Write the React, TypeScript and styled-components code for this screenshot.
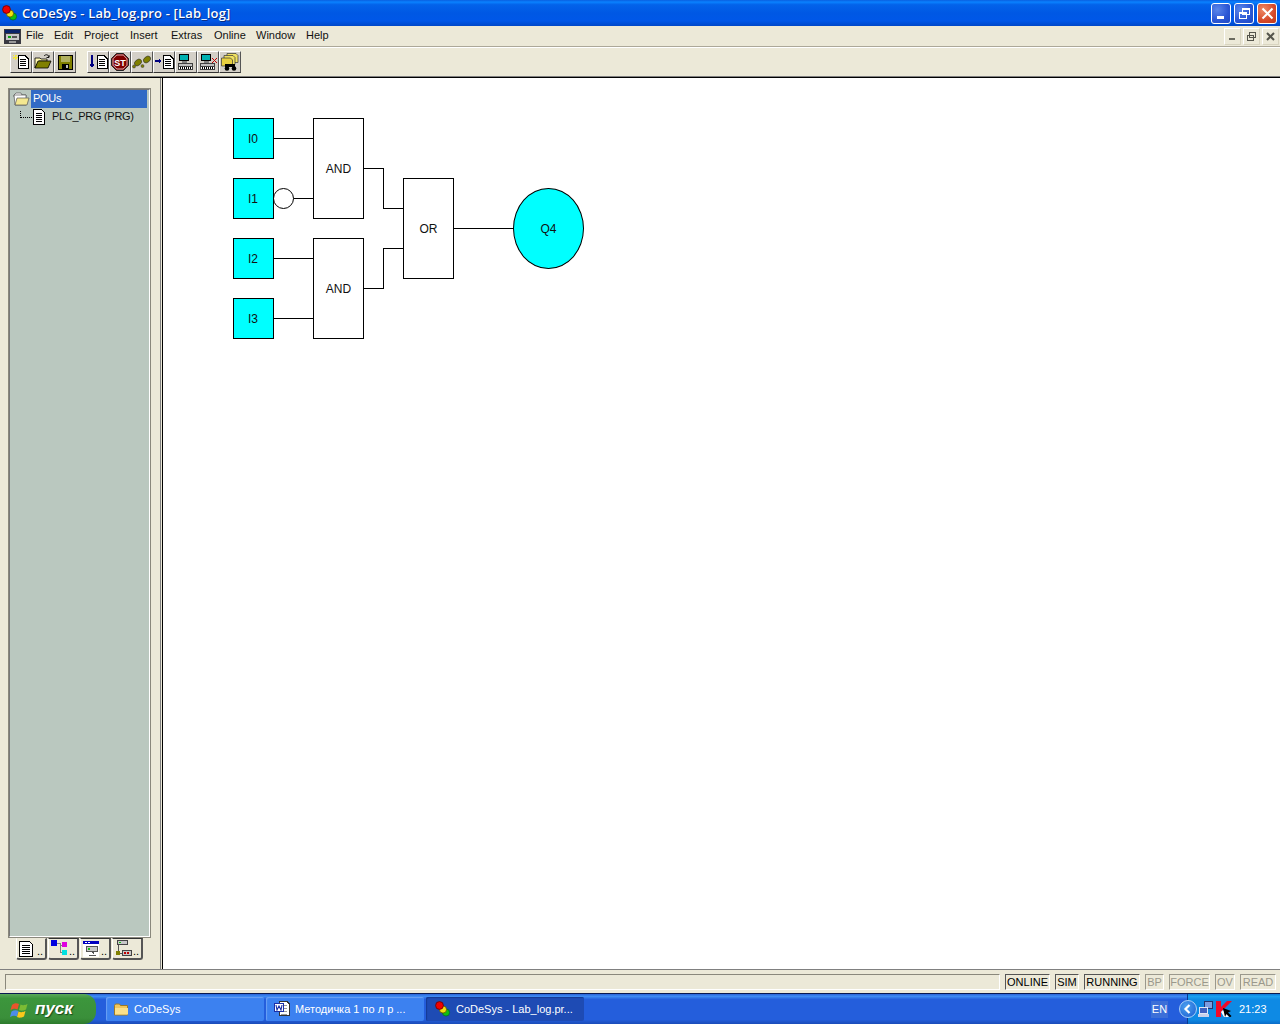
import React from "react";
import styled, { createGlobalStyle } from "styled-components";

const GlobalStyle = createGlobalStyle`
  html, body { margin: 0; padding: 0; background: #ece9d8; }
  * { box-sizing: border-box; }
`;

const uiFont = `"Liberation Sans", Arial, sans-serif`;

const Logo = ({ size = 16 }: { size?: number }) => (
  <svg width={size} height={size} viewBox="0 0 16 16">
    <circle cx="11" cy="11.5" r="3.6" fill="#10c010" stroke="#063" strokeWidth="0.8" />
    <circle cx="8" cy="8.5" r="3.6" fill="#f0e010" stroke="#550" strokeWidth="0.8" />
    <circle cx="4.5" cy="4.5" r="3.9" fill="#f00000" stroke="#600" strokeWidth="0.8" />
  </svg>
);

const DocShape = ({ x = 0 }: { x?: number }) => (
  <g transform={`translate(${x} 0)`}>
    <path d="M3 1.5h7l3 3v10H3z" fill="#fff" stroke="#000" />
    <path d="M5 5h6M5 7h6M5 9h6M5 11h6" stroke="#000" />
  </g>
);

const IconNew = () => (
  <svg width="17" height="16" viewBox="0 0 17 16" shapeRendering="crispEdges">
    <g transform="translate(2 0)">
      <DocShape />
    </g>
    <path d="M0 3h5M2 1v5M0 1l1 1M4 1l-1 1M0 5l1-1M4 5l-1-1" stroke="#f4e838" />
  </svg>
);
const IconOpen = () => (
  <svg width="18" height="16" viewBox="0 0 18 16">
    <path d="M1 4h5l1 1h6v2H5L1 14z" fill="#fff8b0" stroke="#000" strokeWidth="0.8" />
    <path d="M1 14l3-7h13l-3 7z" fill="#808000" stroke="#000" strokeWidth="0.8" />
    <path d="M10 2c2-2 4-1.500 5 1M15 1v2.500h-2.500" fill="none" stroke="#000" strokeWidth="0.9" />
  </svg>
);
const IconSave = () => (
  <svg width="15" height="15" viewBox="0 0 15 15" shapeRendering="crispEdges">
    <path d="M0 0h15v15H0z" fill="#000" />
    <path d="M1 1h13v13H1z" fill="#808000" />
    <path d="M3 1h9v6H3z" fill="#b0b060" />
    <path d="M4 9h7v5H4z" fill="#000" />
    <path d="M8 10h2v3H8z" fill="#c0c0c0" />
  </svg>
);
const IconDownload = () => (
  <svg width="19" height="16" viewBox="0 0 19 16" shapeRendering="crispEdges">
    <path d="M3 1v12M1 10l2 3 2-3" fill="none" stroke="#000080" strokeWidth="1.2" />
    <DocShape x={5} />
  </svg>
);
const IconStop = () => (
  <svg width="18" height="18" viewBox="0 0 18 18">
    <path d="M5.500 0.500h7l5 5v7l-5 5h-7l-5-5v-7z" fill="#800000" stroke="#222" />
    <path d="M5.800 2h6.400l3.800 3.800v6.400L12.200 16H5.800L2 12.200V5.800z" fill="none" stroke="#fff" strokeWidth="0.7" />
    <text x="9" y="12.500" textAnchor="middle" fontFamily={uiFont} fontSize="9" fontWeight="700" fill="#fff">ST</text>
  </svg>
);
const IconSteps = () => (
  <svg width="20" height="16" viewBox="0 0 20 16">
    <ellipse cx="6" cy="8.500" rx="2.800" ry="4" transform="rotate(50 6 8.500)" fill="#808000" stroke="#333" strokeWidth="0.6" />
    <ellipse cx="15" cy="5.500" rx="2.800" ry="4" transform="rotate(50 15 5.500)" fill="#808000" stroke="#333" strokeWidth="0.6" />
    <circle cx="2" cy="12.500" r="1.500" fill="#808000" stroke="#333" strokeWidth="0.5" />
    <circle cx="10.500" cy="12" r="1.500" fill="#808000" stroke="#333" strokeWidth="0.5" />
  </svg>
);
const IconStepIn = () => (
  <svg width="19" height="16" viewBox="0 0 19 16" shapeRendering="crispEdges">
    <path d="M0 7h6M4 5l2 2-2 2" fill="none" stroke="#000080" strokeWidth="1.2" />
    <DocShape x={5} />
  </svg>
);
const IconPlc = ({ cross }: { cross?: boolean }) => (
  <svg width="19" height="17" viewBox="0 0 19 17" shapeRendering="crispEdges">
    <path d="M2 0h10v7H2z" fill="#000" />
    <path d="M3 1h8v5H3z" fill="#00b0b0" />
    <path d="M5 7h5v2H5z" fill="#808080" />
    <path d="M1 9h15v7H1z" fill="#404040" />
    <path d="M2 10h13v2H2z" fill="#c0c0c0" />
    <path d="M2 13h13v2H2z" fill="#fff" />
    <path d="M3 13v2M5 13v2M7 13v2M9 13v2M11 13v2M13 13v2" stroke="#000" />
    {cross && <path d="M13 4l5 5M18 4l-5 5" stroke="#c00000" strokeWidth="1.200" />}
  </svg>
);
const IconProject = () => (
  <svg width="18" height="18" viewBox="0 0 18 18">
    <path d="M6 0.500h9l2 2v7H6z" fill="#f0e060" stroke="#333" strokeWidth="0.7" />
    <path d="M3 2.500h9l2 2v7H3z" fill="#f0e060" stroke="#333" strokeWidth="0.7" />
    <path d="M0.500 5h9l2 2v6h-11z" fill="#e8d040" stroke="#333" strokeWidth="0.7" />
    <path d="M4 11h10v3H4z" fill="#000" />
    <circle cx="6" cy="15.500" r="2.300" fill="#000" />
    <circle cx="13" cy="15.500" r="2.300" fill="#000" />
  </svg>
);
const IconFolderOpen = () => (
  <svg width="17" height="14" viewBox="0 0 17 14">
    <path d="M1 3l2-2h5l1 2h4v2H1z" fill="#fff" stroke="#555" strokeWidth="0.7" />
    <path d="M1 3h12v10H2z" fill="#fff" stroke="#555" strokeWidth="0.7" />
    <path d="M2 13L4 6h12l-2 7z" fill="#f4e890" stroke="#555" strokeWidth="0.7" />
  </svg>
);
const IconFolder = () => (
  <svg width="15" height="13" viewBox="0 0 15 13">
    <path d="M0.500 2.500l1-1.500h4l1 1.500h7v9.500h-13z" fill="#f2c75c" stroke="#9c7a28" />
    <path d="M1 5h13v6.500H1z" fill="#fbe08a" />
  </svg>
);
const IconWord = () => (
  <svg width="16" height="16" viewBox="0 0 16 16" shapeRendering="crispEdges">
    <path d="M5 0.500h8l2 2v12H5z" fill="#fff" stroke="#333" />
    <path d="M7 4h6M7 7h6M7 10h6M7 13h6" stroke="#999" />
    <path d="M0 2h10v9H0z" fill="#1a2fa8" />
    <path d="M1 3h8v7H1z" fill="#fff" />
    <path d="M2 4l1 5 2-4 2 4 1-5" fill="none" stroke="#1a2fa8" strokeWidth="1.100" shapeRendering="auto" />
  </svg>
);
const IconFlag = () => (
  <svg width="20" height="19" viewBox="0 0 20 19">
    <path d="M2 5c2-2 5-2 7-1l-1.500 5.500c-2-1-4-1-7 .5z" fill="#e8542c" />
    <path d="M10.500 4.500c2 1 4 1 7-.5L16 9.500c-3 1.500-5 1.500-7 .5z" fill="#7cbc34" />
    <path d="M0 11.500c2.500-1.500 5-1.500 7-.5l-1.500 5.500c-2-1-4-1-7 .5z" fill="#4c8ce8" transform="translate(1.500 0)" />
    <path d="M8.500 11.500c2 1 4 1 7-.5L14 16.500c-3 1.500-5 1.500-7 .5z" fill="#fcc81c" />
  </svg>
);
const IconChevrons = () => (
  <svg width="10" height="10" viewBox="0 0 10 10">
    <path d="M6.500 1L2.500 5l4 4" fill="none" stroke="#fff" strokeWidth="2.200" />
  </svg>
);
const IconNetwork = () => (
  <svg width="15" height="16" viewBox="0 0 15 16" shapeRendering="crispEdges">
    <path d="M6 0h9v8H6z" fill="#26346e" />
    <path d="M7 1h7v6H7z" fill="#7c9ce0" />
    <path d="M1 6h9v7H1z" fill="#dfe6f5" />
    <path d="M2 7h7v5H2z" fill="#3f62c0" />
    <path d="M0 13h11v3H0z" fill="#c7d2ea" />
  </svg>
);
const IconKaspersky = () => (
  <svg width="16" height="16" viewBox="0 0 16 16">
    <path d="M0 0h5v16H0z" fill="#f00a28" />
    <path d="M5 6l6-6h5L5 11z" fill="#f00a28" />
    <path d="M5 11l2-2 6 7H8z" fill="#fff" />
    <path d="M7 7l8 3-3 1.500 3.500 3.500-1.500 1.500-3.500-3.500-1.500 3z" fill="#000" />
  </svg>
);
const TabDoc = () => (
  <svg width="14" height="17" viewBox="0 0 14 17" shapeRendering="crispEdges">
    <path d="M0.500 1.500h10l3 3v12h-13z" fill="#fff" stroke="#000" />
    <path d="M3 5h8M3 7h8M3 9h8M3 11h8M3 13h8" stroke="#000" />
  </svg>
);
const TabTypes = () => (
  <svg width="17" height="17" viewBox="0 0 17 17" shapeRendering="crispEdges">
    <path d="M0 0h6v6H0z" fill="#0000e0" />
    <path d="M11 2h5v5h-5z" fill="#e000e0" />
    <path d="M11 10h5v5h-5z" fill="#00e0e0" />
    <path d="M6 3h3v9h2M9 5h2" fill="none" stroke="#808080" />
  </svg>
);
const TabVis = () => (
  <svg width="16" height="16" viewBox="0 0 16 16" shapeRendering="crispEdges">
    <path d="M0 0h16v16H0z" fill="#fff" />
    <path d="M0 0h16v3H0z" fill="#0000c0" />
    <path d="M2 1h2M5 1h2" stroke="#fff" />
    <path d="M3 5h12v6H3z" fill="#555" />
    <path d="M4 6h10v4H4z" fill="#c8c8c8" />
    <path d="M5 7h2v2H5z" fill="#10c010" />
    <path d="M8 11h3v3H6v1h7v-1h-2" fill="#555" />
  </svg>
);
const TabRes = () => (
  <svg width="17" height="17" viewBox="0 0 17 17" shapeRendering="crispEdges">
    <path d="M2 0h11v5H2z" fill="#444" />
    <path d="M3 1h9v3H3z" fill="#c8c8c8" />
    <path d="M4 2h2v1H4z" fill="#10c010" />
    <path d="M7 10h10v6H7z" fill="#444" />
    <path d="M8 11h8v4H8z" fill="#c8c8c8" />
    <path d="M9 12h2v2H9zM12 12h2v2h-2z" fill="#c00000" />
    <path d="M3 5v8h4" fill="none" stroke="#555" />
    <path d="M1 11h4v4H1z" fill="#808000" />
  </svg>
);

const tabs = [
  { id: "pou", icon: <TabDoc />, active: true },
  { id: "types", icon: <TabTypes />, active: false },
  { id: "vis", icon: <TabVis />, active: false },
  { id: "res", icon: <TabRes />, active: false },
];

const menuItems = [
  { label: "File", w: 28 },
  { label: "Edit", w: 30 },
  { label: "Project", w: 46 },
  { label: "Insert", w: 41 },
  { label: "Extras", w: 43 },
  { label: "Online", w: 42 },
  { label: "Window", w: 50 },
  { label: "Help", w: 30 },
];

const statusCells = [
  { label: "ONLINE", w: 45, on: true },
  { label: "SIM", w: 24, on: true },
  { label: "RUNNING", w: 56, on: true },
  { label: "BP", w: 19, on: false },
  { label: "FORCE", w: 41, on: false },
  { label: "OV", w: 20, on: false },
  { label: "READ", w: 36, on: false },
];

const blocks = [
  { label: "I0", x: 0, y: 0, w: 41, h: 41, input: true },
  { label: "I1", x: 0, y: 60, w: 41, h: 41, input: true },
  { label: "I2", x: 0, y: 120, w: 41, h: 41, input: true },
  { label: "I3", x: 0, y: 180, w: 41, h: 41, input: true },
  { label: "AND", x: 80, y: 0, w: 51, h: 101, input: false },
  { label: "AND", x: 80, y: 120, w: 51, h: 101, input: false },
  { label: "OR", x: 170, y: 60, w: 51, h: 101, input: false },
];

const wires = [
  "M40 20.500H80",
  "M60 80.500H80",
  "M40 140.500H80",
  "M40 200.500H80",
  "M130 50.500H150.500V90.500H170",
  "M130 170.500H150.500V130.500H170",
  "M220 110.500H280",
];

const App = () => {
  return (
    <Screen>
      <GlobalStyle />
      <TitleBar>
        <TitleIcon>
          <Logo />
        </TitleIcon>
        <TitleText>CoDeSys - Lab_log.pro - [Lab_log]</TitleText>
        <CaptionButtons>
          <CaptionButton>
            <svg width="13" height="13" viewBox="0 0 13 13" shapeRendering="crispEdges">
              <path d="M2 9h7v3H2z" fill="#fff" />
            </svg>
          </CaptionButton>
          <CaptionButton>
            <svg width="13" height="13" viewBox="0 0 13 13" shapeRendering="crispEdges">
              <path d="M4.500 1.500h7v6h-7zM4 2.500h8M1.500 5.500h7v6h-7zM1 6.500h8" fill="none" stroke="#fff" />
            </svg>
          </CaptionButton>
          <CaptionButton $close>
            <svg width="13" height="13" viewBox="0 0 13 13">
              <path d="M1.500 1.500l10 10M11.500 1.500l-10 10" stroke="#fff" strokeWidth="2" />
            </svg>
          </CaptionButton>
        </CaptionButtons>
      </TitleBar>

      <MenuBar>
        <MenuIcon>
          <svg width="17" height="15" viewBox="0 0 17 15" shapeRendering="crispEdges">
            <path d="M0 0h17v15H0z" fill="#3a3a42" />
            <path d="M1 1h15v3H1z" fill="#0a246a" />
            <path d="M2 5h13v6H2z" fill="#c8c8c8" />
            <path d="M4 7h3v2H4z" fill="#10a010" />
            <path d="M8 7h5v2H8z" fill="#555" />
            <path d="M5 12h7v2H5z" fill="#999" />
          </svg>
        </MenuIcon>
        <MenuItems>
          {menuItems.map((item) => (
            <MenuItem key={item.label} $w={item.w}>
              {item.label}
            </MenuItem>
          ))}
        </MenuItems>
        <MdiButtons>
          <MdiButton>
            <svg width="11" height="11" viewBox="0 0 11 11" shapeRendering="crispEdges">
              <path d="M2 7h6v2H2z" fill="#6b6b60" />
            </svg>
          </MdiButton>
          <MdiButton>
            <svg width="11" height="11" viewBox="0 0 11 11" shapeRendering="crispEdges">
              <path d="M3.500 1.500h6v5h-6zM1.500 4.500h6v5h-6z" fill="#ece9d8" stroke="#55554c" />
            </svg>
          </MdiButton>
          <MdiButton>
            <svg width="11" height="11" viewBox="0 0 11 11">
              <path d="M2 2l7 7M9 2l-7 7" stroke="#55554c" strokeWidth="2" />
            </svg>
          </MdiButton>
        </MdiButtons>
      </MenuBar>

      <ToolBar>
        <ToolGroup>
          <ToolButton><IconNew /></ToolButton>
          <ToolButton><IconOpen /></ToolButton>
          <ToolButton><IconSave /></ToolButton>
        </ToolGroup>
        <ToolGroup>
          <ToolButton><IconDownload /></ToolButton>
          <ToolButton><IconStop /></ToolButton>
          <ToolButton><IconSteps /></ToolButton>
          <ToolButton><IconStepIn /></ToolButton>
          <ToolButton><IconPlc /></ToolButton>
          <ToolButton><IconPlc cross /></ToolButton>
          <ToolButton><IconProject /></ToolButton>
        </ToolGroup>
      </ToolBar>

      <Main>
        <Sidebar>
          <TreeBox>
            <TreeRow>
              <TreeIcon><IconFolderOpen /></TreeIcon>
              <TreeLabel $selected>POUs</TreeLabel>
            </TreeRow>
            <TreeRow $child>
              <TreeDots />
              <TreeDocIcon>
                <svg width="14" height="16" viewBox="0 0 14 16" shapeRendering="crispEdges">
                  <path d="M1.500 0.500h8l3 3v12h-11z" fill="#fff" stroke="#000" />
                  <path d="M4 4h6M4 6h6M4 8h6M4 10h6M4 12h6" stroke="#000" />
                </svg>
              </TreeDocIcon>
              <TreeLabel>PLC_PRG (PRG)</TreeLabel>
            </TreeRow>
          </TreeBox>
          <Tabs>
            {tabs.map((tab) => (
              <Tab key={tab.id} $active={tab.active}>
                {tab.icon}
                <TabDots>..</TabDots>
              </Tab>
            ))}
          </Tabs>
        </Sidebar>
        <Splitter />
        <Canvas>
          <Diagram>
            <WireLayer width="360" height="230" viewBox="0 0 360 230" shapeRendering="crispEdges">
              {wires.map((d) => (
                <path key={d} d={d} fill="none" stroke="#000" />
              ))}
            </WireLayer>
            <Bubble />
            {blocks.map((b, i) => (
              <Block key={i} $x={b.x} $y={b.y} $w={b.w} $h={b.h} $input={b.input}>
                {b.label}
              </Block>
            ))}
            <Output>Q4</Output>
          </Diagram>
        </Canvas>
      </Main>

      <StatusBar>
        <StatusMessage />
        {statusCells.map((c) => (
          <StatusCell key={c.label} $w={c.w} $on={c.on}>
            {c.label}
          </StatusCell>
        ))}
      </StatusBar>

      <Taskbar>
        <StartButton>
          <IconFlag />
          <StartLabel>пуск</StartLabel>
        </StartButton>
        <TaskButtons>
          <TaskButton>
            <IconFolder />
            <TaskLabel>CoDeSys</TaskLabel>
          </TaskButton>
          <TaskButton>
            <IconWord />
            <TaskLabel>Методичка 1 по л р ...</TaskLabel>
          </TaskButton>
          <TaskButton $active>
            <Logo />
            <TaskLabel>CoDeSys - Lab_log.pr...</TaskLabel>
          </TaskButton>
        </TaskButtons>
        <LangBox>EN</LangBox>
        <TrayToggle>
          <IconChevrons />
        </TrayToggle>
        <Tray>
          <IconNetwork />
          <IconKaspersky />
          <Clock>21:23</Clock>
        </Tray>
      </Taskbar>
    </Screen>
  );
};

export default App;

const Screen = styled.div`
  width: 1280px;
  height: 1024px;
  display: flex;
  flex-direction: column;
  overflow: hidden;
  background: #ece9d8;
  font-family: ${uiFont};
  font-size: 11px;
  color: #000;
`;

const TitleBar = styled.div`
  height: 26px;
  flex: none;
  display: flex;
  align-items: center;
  padding: 0 3px 0 2px;
  background: linear-gradient(
    180deg,
    #0a5fe0 0%,
    #0a82ff 8%,
    #0363ea 18%,
    #0058e4 50%,
    #0057e8 80%,
    #0048c8 100%
  );
`;
const TitleIcon = styled.div`
  display: flex;
  margin-right: 4px;
`;
const TitleText = styled.div`
  flex: 1;
  color: #fff;
  font-family: "Open Sans", sans-serif;
  font-size: 13px;
  font-weight: 600;
  letter-spacing: 0.16px;
  text-shadow: 1px 1px 0 #0a2c80;
`;
const CaptionButtons = styled.div`
  display: flex;
  gap: 3px;
`;
const CaptionButton = styled.div<{ $close?: boolean }>`
  width: 20px;
  height: 21px;
  display: flex;
  align-items: center;
  justify-content: center;
  border: 1px solid #fff;
  border-radius: 3px;
  background: ${({ $close }) =>
    $close
      ? "radial-gradient(circle at 30% 30%, #ee8a66, #d6492a 60%, #c03a18)"
      : "radial-gradient(circle at 30% 30%, #5a86ea, #2a56d4 60%, #1f48c4)"};
`;

const MenuBar = styled.div`
  height: 21px;
  flex: none;
  display: flex;
  align-items: center;
  padding-left: 4px;
  background: #ece9d8;
  border-bottom: 1px solid #aca899;
`;
const MenuIcon = styled.div`
  display: flex;
  margin-right: 5px;
`;
const MenuItems = styled.div`
  flex: 1;
  display: flex;
  padding-bottom: 2px;
`;
const MenuItem = styled.span<{ $w: number }>`
  width: ${({ $w }) => $w}px;
  color: #111;
`;
const MdiButtons = styled.div`
  display: flex;
  gap: 2px;
  padding-right: 1px;
`;
const MdiButton = styled.div`
  width: 17px;
  height: 17px;
  display: flex;
  align-items: center;
  justify-content: center;
  border: 1px solid #fff;
  border-right-color: #d8d4c0;
  border-bottom-color: #d8d4c0;
`;

const ToolBar = styled.div`
  height: 31px;
  flex: none;
  display: flex;
  align-items: center;
  gap: 11px;
  padding: 0 0 1px 10px;
  background: #ece9d8;
  border-top: 1px solid #fff;
  border-bottom: 1px solid #000;
  box-shadow: inset 0 -1px 0 #808080;
`;
const ToolGroup = styled.div`
  display: flex;
`;
const ToolButton = styled.div`
  width: 22px;
  height: 22px;
  display: flex;
  align-items: center;
  justify-content: center;
  background: #d4d0c8;
  border: 1px solid;
  border-color: #fff #555 #333 #fff;
`;

const Main = styled.div`
  flex: 1;
  min-height: 0;
  display: flex;
`;
const Sidebar = styled.div`
  width: 160px;
  flex: none;
  display: flex;
  flex-direction: column;
  padding: 10px 9px 9px 8px;
`;
const TreeBox = styled.div`
  flex: 1;
  min-height: 0;
  background: #bac8bf;
  border: 2px solid;
  border-color: #777 #fff #fff #777;
  outline: 1px solid #8a887c;
  outline-offset: -1px;
  padding: 0 2px;
`;
const TreeRow = styled.div<{ $child?: boolean }>`
  height: 18px;
  display: flex;
  align-items: center;
  padding-left: ${({ $child }) => ($child ? "8px" : "1px")};
`;
const TreeIcon = styled.div`
  display: flex;
  width: 18px;
`;
const TreeDots = styled.div`
  width: 12px;
  height: 7px;
  margin-top: -6px;
  border-left: 1px dotted #000;
  border-bottom: 1px dotted #000;
`;
const TreeDocIcon = styled.div`
  display: flex;
  margin-right: 4px;
`;
const TreeLabel = styled.div<{ $selected?: boolean }>`
  flex: ${({ $selected }) => ($selected ? 1 : "none")};
  height: 18px;
  line-height: 17px;
  padding-left: 2px;
  letter-spacing: -0.3px;
  color: ${({ $selected }) => ($selected ? "#fff" : "#111")};
  background: ${({ $selected }) => ($selected ? "#316ac5" : "transparent")};
`;
const Tabs = styled.div`
  height: 22px;
  flex: none;
  display: flex;
  gap: 1px;
  padding-left: 8px;
`;
const Tab = styled.div<{ $active: boolean }>`
  width: 31px;
  display: flex;
  align-items: center;
  padding-left: 2px;
  background: #ece9d8;
  border: 1px solid #fff;
  border-top: ${({ $active }) => ($active ? "1px solid #ece9d8" : "1px solid #333")};
  border-right: 2px solid #555;
  border-bottom: 2px solid #555;
  border-radius: 0 0 3px 3px;
`;
const TabDots = styled.span`
  margin-left: auto;
  padding-right: 2px;
  padding-top: 4px;
  line-height: 10px;
`;
const Splitter = styled.div`
  width: 3px;
  flex: none;
  background: #ece9d8;
  border-left: 1px solid #808080;
  border-right: 1px solid #000;
`;
const Canvas = styled.div`
  flex: 1;
  background: #fff;
  padding: 40px 0 0 70px;
`;
const Diagram = styled.div`
  position: relative;
  width: 360px;
  height: 230px;
`;
const WireLayer = styled.svg`
  position: absolute;
  left: 0;
  top: 0;
`;
const Block = styled.div<{ $x: number; $y: number; $w: number; $h: number; $input: boolean }>`
  position: absolute;
  left: ${({ $x }) => $x}px;
  top: ${({ $y }) => $y}px;
  width: ${({ $w }) => $w}px;
  height: ${({ $h }) => $h}px;
  display: flex;
  align-items: center;
  justify-content: center;
  padding-right: ${({ $input }) => ($input ? "1px" : "0")};
  border: 1px solid #000;
  background: ${({ $input }) => ($input ? "#00ffff" : "#fff")};
  font-size: 12px;
  color: #111;
`;
const Bubble = styled.div`
  position: absolute;
  left: 40px;
  top: 70px;
  width: 21px;
  height: 21px;
  border: 1px solid #000;
  border-radius: 50%;
  background: #fff;
`;
const Output = styled.div`
  position: absolute;
  left: 280px;
  top: 70px;
  width: 71px;
  height: 81px;
  display: flex;
  align-items: center;
  justify-content: center;
  border: 1px solid #000;
  border-radius: 50%;
  background: #00ffff;
  font-size: 12px;
  color: #111;
`;

const StatusBar = styled.div`
  height: 24px;
  flex: none;
  display: flex;
  align-items: flex-start;
  gap: 5px;
  padding: 4px 4px 0 5px;
  background: #ece9d8;
  border-top: 1px solid #808080;
`;
const StatusMessage = styled.div`
  flex: 1;
  height: 16px;
  border: 1px solid;
  border-color: #8a887c #fff #fff #8a887c;
`;
const StatusCell = styled.div<{ $w: number; $on: boolean }>`
  width: ${({ $w }) => $w}px;
  height: 16px;
  flex: none;
  display: flex;
  align-items: center;
  justify-content: center;
  font-size: 11px;
  border: 1px solid;
  border-color: ${({ $on }) => ($on ? "#555 #fff #fff #555" : "#9a988c #fff #fff #9a988c")};
  color: ${({ $on }) => ($on ? "#000" : "#9a988c")};
`;

const Taskbar = styled.div`
  height: 31px;
  flex: none;
  display: flex;
  align-items: center;
  border-top: 1px solid #0a1a50;
  background: linear-gradient(180deg, #2a63d8 0%, #3f8cf3 8%, #245edc 18%, #245edc 85%, #1a4cb8 100%);
`;
const StartButton = styled.div`
  width: 96px;
  height: 100%;
  flex: none;
  display: flex;
  align-items: center;
  gap: 5px;
  padding-left: 10px;
  border-radius: 0 12px 12px 0;
  background: linear-gradient(180deg, #5aa85a 0%, #3c963c 15%, #3a8f3a 80%, #2c7a2c 100%);
`;
const StartLabel = styled.span`
  color: #fff;
  font-size: 17px;
  font-weight: 700;
  font-style: italic;
  text-shadow: 1px 1px 1px #1a4a1a;
`;
const TaskButtons = styled.div`
  flex: 1;
  display: flex;
  gap: 2px;
  padding-left: 10px;
`;
const TaskButton = styled.div<{ $active?: boolean }>`
  width: 158px;
  height: 24px;
  display: flex;
  align-items: center;
  gap: 5px;
  padding-left: ${({ $active }) => ($active ? "9px" : "8px")};
  border-radius: 2px;
  background: ${({ $active }) => ($active ? "#1e4bb4" : "#3c81f0")};
  box-shadow: ${({ $active }) =>
    $active ? "inset 1px 1px 1px #143a94" : "inset 1px 1px 1px #6ba0f4"};
`;
const TaskLabel = styled.span`
  color: #fff;
  white-space: nowrap;
`;
const LangBox = styled.div`
  width: 17px;
  height: 17px;
  flex: none;
  display: flex;
  align-items: center;
  justify-content: center;
  margin-right: 11px;
  background: #3c6fd8;
  color: #fff;
`;
const TrayToggle = styled.div`
  position: relative;
  z-index: 1;
  width: 18px;
  height: 18px;
  flex: none;
  margin-right: -10px;
  display: flex;
  align-items: center;
  justify-content: center;
  border-radius: 50%;
  border: 1px solid #a8d0f8;
  background: radial-gradient(circle at 40% 35%, #4aa0f0, #1a5cd0);
`;
const Tray = styled.div`
  width: 93px;
  height: 100%;
  flex: none;
  display: flex;
  align-items: center;
  gap: 3px;
  padding-left: 10px;
  border-left: 1px solid #0a3a90;
  background: linear-gradient(180deg, #0c78d8 0%, #18a0f0 8%, #0e8ae4 18%, #0e8ae4 85%, #0a6cc8 100%);
`;
const Clock = styled.span`
  margin-left: 4px;
  color: #fff;
`;
